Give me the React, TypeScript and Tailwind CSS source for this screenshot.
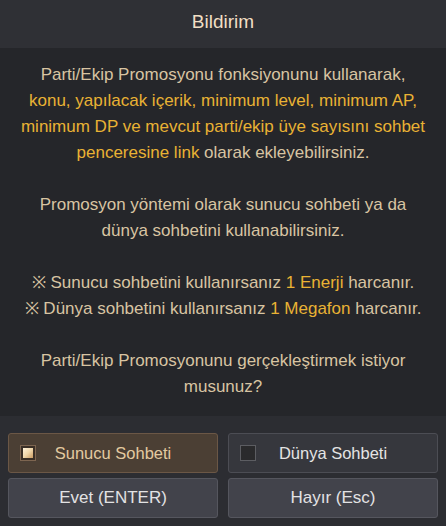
import React from "react";

const Y = ({ children }: { children: React.ReactNode }) => (
  <span className="text-[#e9b234]">{children}</span>
);

export default function App() {
  return (
    <div
      className="w-[446px] h-[526px] flex flex-col bg-[#26272b] overflow-hidden"
      style={{ fontFamily: '"Liberation Sans", Arial, sans-serif' }}
    >
      <div className="h-[48px] shrink-0 bg-[#2f3035] flex items-center justify-center pb-[4px]">
        <span className="text-[19px] text-[#f1dfc4]">Bildirim</span>
      </div>
      <div className="h-[368px] shrink-0 bg-[#25262a] pt-[14px] px-[4px] text-center text-[17px] leading-[26px] text-[#d8c4a2] whitespace-nowrap">
        <p>
          Parti/Ekip Promosyonu fonksiyonunu kullanarak,
          <br />
          <Y>konu, yapılacak içerik, minimum level, minimum AP,</Y>
          <br />
          <Y>minimum DP ve mevcut parti/ekip üye sayısını sohbet</Y>
          <br />
          <Y>penceresine link</Y> olarak ekleyebilirsiniz.
        </p>
        <p className="mt-[26px]">
          Promosyon yöntemi olarak sunucu sohbeti ya da
          <br />
          dünya sohbetini kullanabilirsiniz.
        </p>
        <p className="mt-[26px]">
          ※ Sunucu sohbetini kullanırsanız <Y>1 Enerji</Y> harcanır.
          <br />
          ※ Dünya sohbetini kullanırsanız <Y>1 Megafon</Y> harcanır.
        </p>
        <p className="mt-[26px]">
          Parti/Ekip Promosyonunu gerçekleştirmek istiyor
          <br />
          musunuz?
        </p>
      </div>
      <div className="flex-1 bg-[#2c2d32] px-[8px] pt-[17px] flex flex-col gap-[5px]">
        <div className="grid grid-cols-2 gap-[10px]">
          <div className="relative h-[40px] rounded-[3px] border border-[#6b5746] bg-[#4b3f34] flex items-center justify-center">
            <span className="absolute left-[11px] top-[11px] w-[16px] h-[16px] border border-[#7d6550] bg-[#3a2f26] flex items-center justify-center">
              <span className="w-[10px] h-[10px] bg-gradient-to-br from-[#fff3da] via-[#f0d7aa] to-[#c89a62]" />
            </span>
            <span className="text-[16.5px] text-[#e3caa0]">Sunucu Sohbeti</span>
          </div>
          <div className="relative h-[40px] rounded-[3px] border border-[#4c4d54] bg-[#36373d] flex items-center justify-center">
            <span className="absolute left-[11px] top-[11px] w-[16px] h-[16px] border border-[#5c5d62] bg-[#2a2a2c]" />
            <span className="text-[16.5px] text-[#e4e4e4]">Dünya Sohbeti</span>
          </div>
        </div>
        <div className="grid grid-cols-2 gap-[10px]">
          <div className="h-[40px] rounded-[3px] border border-[#55565e] bg-[#42434b] flex items-center justify-center">
            <span className="text-[17px] text-[#e2e2e4]">Evet (ENTER)</span>
          </div>
          <div className="h-[40px] rounded-[3px] border border-[#55565e] bg-[#42434b] flex items-center justify-center">
            <span className="text-[17px] text-[#e2e2e4]">Hayır (Esc)</span>
          </div>
        </div>
      </div>
    </div>
  );
}
